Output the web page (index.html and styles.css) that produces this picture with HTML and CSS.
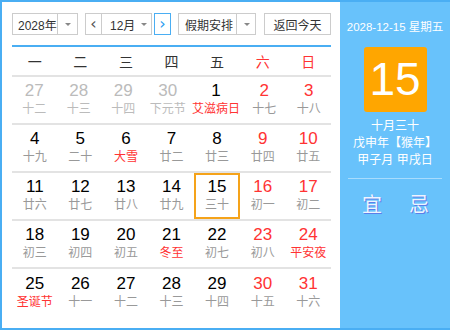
FILE: index.html
```html
<!DOCTYPE html>
<html lang="zh-CN">
<head>
    <meta charset="UTF-8">
    <title>万年历</title>
    <link rel="stylesheet" href="styles.css">
</head>
<body>
    <div class="calendar">
        <div class="cal-main">
            <!-- toolbar -->
            <div class="toolbar">
                <div class="select select-year">
                    <span class="select-text">2028年</span>
                    <span class="select-arrow"></span>
                </div>
                <div class="month-group">
                    <button class="nav-btn">&lsaquo;</button>
                    <div class="select select-month">
                        <span class="select-text">12月</span>
                        <span class="select-arrow"></span>
                    </div>
                    <button class="nav-btn nav-next">&rsaquo;</button>
                </div>
                <div class="select select-holiday">
                    <span class="select-text">假期安排</span>
                    <span class="select-arrow"></span>
                </div>
                <button class="today-btn">返回今天</button>
            </div>

            <div class="week-head">
                <span>一</span><span>二</span><span>三</span><span>四</span><span>五</span>
                <span class="red">六</span><span class="red">日</span>
            </div>

            <div class="days">
                <div class="week">
                    <div class="day other"><b>27</b><i>十二</i></div>
                    <div class="day other"><b>28</b><i>十三</i></div>
                    <div class="day other"><b>29</b><i>十四</i></div>
                    <div class="day other"><b>30</b><i>下元节</i></div>
                    <div class="day"><b>1</b><i class="red">艾滋病日</i></div>
                    <div class="day weekend"><b>2</b><i>十七</i></div>
                    <div class="day weekend"><b>3</b><i>十八</i></div>
                </div>
                <div class="week">
                    <div class="day"><b>4</b><i>十九</i></div>
                    <div class="day"><b>5</b><i>二十</i></div>
                    <div class="day"><b>6</b><i class="red">大雪</i></div>
                    <div class="day"><b>7</b><i>廿二</i></div>
                    <div class="day"><b>8</b><i>廿三</i></div>
                    <div class="day weekend"><b>9</b><i>廿四</i></div>
                    <div class="day weekend"><b>10</b><i>廿五</i></div>
                </div>
                <div class="week">
                    <div class="day"><b>11</b><i>廿六</i></div>
                    <div class="day"><b>12</b><i>廿七</i></div>
                    <div class="day"><b>13</b><i>廿八</i></div>
                    <div class="day"><b>14</b><i>廿九</i></div>
                    <div class="day selected"><b>15</b><i>三十</i></div>
                    <div class="day weekend"><b>16</b><i>初一</i></div>
                    <div class="day weekend"><b>17</b><i>初二</i></div>
                </div>
                <div class="week">
                    <div class="day"><b>18</b><i>初三</i></div>
                    <div class="day"><b>19</b><i>初四</i></div>
                    <div class="day"><b>20</b><i>初五</i></div>
                    <div class="day"><b>21</b><i class="red">冬至</i></div>
                    <div class="day"><b>22</b><i>初七</i></div>
                    <div class="day weekend"><b>23</b><i>初八</i></div>
                    <div class="day weekend"><b>24</b><i class="red">平安夜</i></div>
                </div>
                <div class="week last">
                    <div class="day"><b>25</b><i class="red">圣诞节</i></div>
                    <div class="day"><b>26</b><i>十一</i></div>
                    <div class="day"><b>27</b><i>十二</i></div>
                    <div class="day"><b>28</b><i>十三</i></div>
                    <div class="day"><b>29</b><i>十四</i></div>
                    <div class="day weekend"><b>30</b><i>十五</i></div>
                    <div class="day weekend"><b>31</b><i>十六</i></div>
                </div>
            </div>
        </div>

        <!-- side panel -->
        <div class="cal-side">
            <div class="side-date">2028-12-15 星期五</div>
            <div class="side-day">15</div>
            <div class="side-lunar">
                <p>十月三十</p>
                <p>戊申年【猴年】</p>
                <p>甲子月 甲戌日</p>
            </div>
            <div class="side-yiji">
                <span>宜</span>
                <span>忌</span>
            </div>
        </div>
    </div>
</body>
</html>
```

FILE: styles.css
```css
* {
    margin: 0;
    padding: 0;
    box-sizing: border-box;
}

body {
    font-family: 'Liberation Sans', 'Noto Sans CJK SC', sans-serif;
    background: #fff;
}

.calendar {
    width: 450px;
    height: 330px;
    display: flex;
    border: 2px solid #4aaef3;
    border-right: none;
}

.cal-main {
    width: 338px;
    padding: 11px 9px 0 10px;
    background: #fff;
}

/* toolbar */
.toolbar {
    display: flex;
    align-items: center;
    height: 22px;
}

.select {
    display: flex;
    height: 22px;
    border: 1px solid #ccc;
    font-size: 12px;
    color: #333;
    background: #fff;
    white-space: nowrap;
}

.select-text {
    display: flex;
    align-items: center;
    padding-left: 5px;
    border-right: 1px solid #ccc;
}

.select-arrow {
    width: 19px;
    position: relative;
}

.select-arrow::after {
    content: '';
    position: absolute;
    left: 7px;
    top: 9px;
    border: 3px solid transparent;
    border-top: 3px solid #888;
}

.select-year {
    width: 66px;
}

.select-year .select-text {
    width: 46px;
}

.month-group {
    display: flex;
    margin-left: 7px;
}

.nav-btn {
    width: 17px;
    height: 22px;
    border: 1px solid #ccc;
    background: #fff;
    color: #555;
    font-size: 16px;
    line-height: 18px;
    font-family: 'DejaVu Sans', sans-serif;
}

.nav-next {
    margin-left: 2px;
    border-color: #4aaef3;
    color: #2b9cf0;
}

.select-month {
    width: 50px;
    border-left: none;
}

.select-month .select-text {
    width: 32px;
    padding-left: 8px;
    border-right: none;
}

.select-holiday {
    width: 78px;
    margin-left: 7px;
}

.select-holiday .select-text {
    width: 59px;
    padding-left: 6px;
}

.today-btn {
    width: 68px;
    height: 22px;
    margin-left: 8px;
    border: 1px solid #ccc;
    background: #fff;
    color: #333;
    font-size: 12px;
    font-family: inherit;
    white-space: nowrap;
}

/* week header */
.week-head {
    display: grid;
    grid-template-columns: repeat(7, 1fr);
    margin-top: 10px;
    height: 32px;
    border-top: 2px solid #4aaef3;
    border-bottom: 2px solid #e3e3e3;
    font-size: 14px;
    color: #333;
}

.week-head span {
    display: flex;
    align-items: center;
    justify-content: center;
}

.red {
    color: #f33 !important;
}

/* days */
.week {
    display: grid;
    grid-template-columns: repeat(7, 1fr);
    height: 48px;
    border-bottom: 2px solid #e3e3e3;
}

.week.last {
    border-bottom: none;
}

.day {
    display: flex;
    flex-direction: column;
    align-items: center;
    justify-content: center;
    border: 2px solid transparent;
    white-space: nowrap;
    padding-bottom: 2px;
}

.day b {
    font-weight: normal;
    font-size: 17px;
    line-height: 20px;
    color: #000;
}

.day i {
    font-style: normal;
    font-size: 12px;
    line-height: 16px;
    color: #999;
}

.day.other b {
    color: #bbb;
}

.day.other i {
    color: #bbb;
}

.day.weekend b {
    color: #f33;
}

.day.selected {
    border-color: #f5a31a;
}

/* side panel */
.cal-side {
    flex: 1;
    background: #68c2fb;
    color: #fff;
    text-align: center;
}

.side-date {
    margin-top: 16px;
    font-size: 11.5px;
    white-space: nowrap;
}

.side-day {
    width: 63px;
    height: 65px;
    margin: 13px auto 0;
    background: #ffa600;
    border-radius: 3px;
    font-size: 46px;
    line-height: 65px;
}

.side-lunar {
    margin: 6px 8px 0;
    padding-bottom: 9px;
    border-bottom: 1px solid #a8dcfd;
    font-size: 12px;
    line-height: 17px;
}

.side-yiji {
    display: flex;
    justify-content: space-between;
    padding: 10px 21px 0 22px;
    font-size: 20px;
    color: #eef4ff;
    text-shadow: 1px 1px 0 #5b7ee8;
}
```
